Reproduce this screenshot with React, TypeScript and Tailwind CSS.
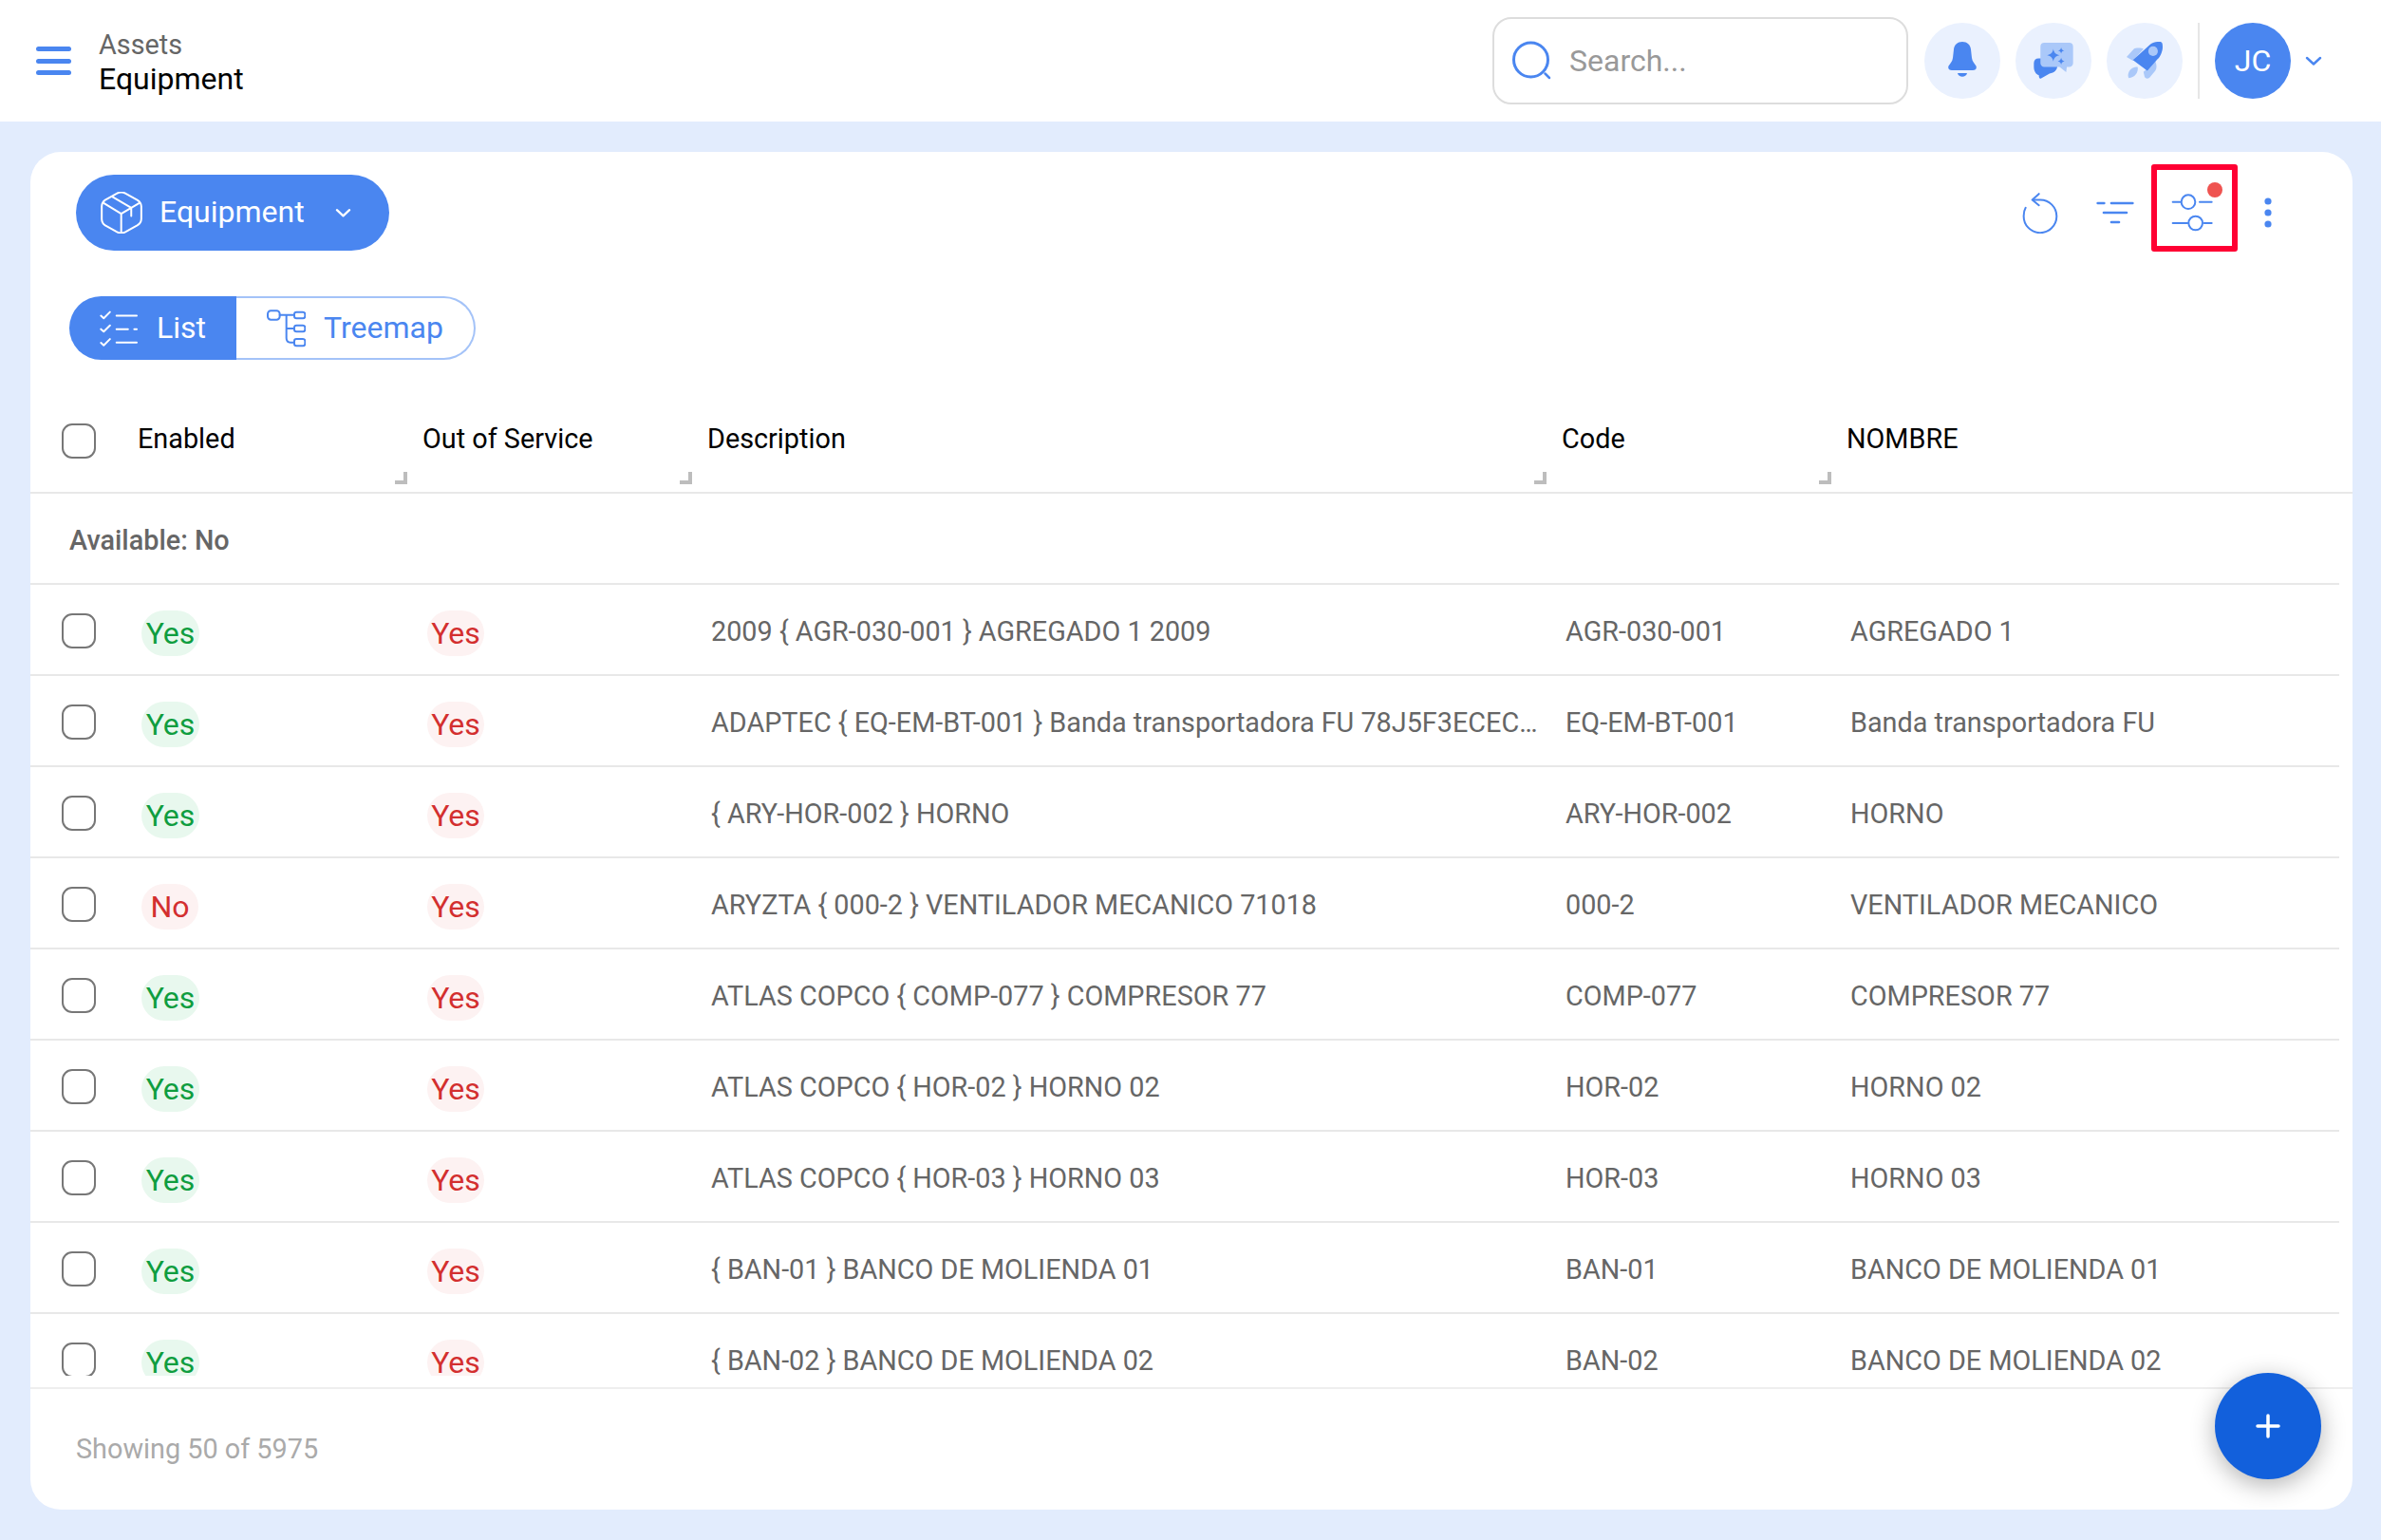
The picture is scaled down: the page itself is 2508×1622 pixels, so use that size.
import React from "react";

const rows = [
  { enabled: "Yes", desc: "2009 { AGR-030-001 } AGREGADO 1 2009", code: "AGR-030-001", name: "AGREGADO 1" },
  { enabled: "Yes", desc: "ADAPTEC { EQ-EM-BT-001 } Banda transportadora FU 78J5F3ECEC1 2014", code: "EQ-EM-BT-001", name: "Banda transportadora FU" },
  { enabled: "Yes", desc: "{ ARY-HOR-002 } HORNO", code: "ARY-HOR-002", name: "HORNO" },
  { enabled: "No", desc: "ARYZTA { 000-2 } VENTILADOR MECANICO 71018", code: "000-2", name: "VENTILADOR MECANICO" },
  { enabled: "Yes", desc: "ATLAS COPCO { COMP-077 } COMPRESOR 77", code: "COMP-077", name: "COMPRESOR 77" },
  { enabled: "Yes", desc: "ATLAS COPCO { HOR-02 } HORNO 02", code: "HOR-02", name: "HORNO 02" },
  { enabled: "Yes", desc: "ATLAS COPCO { HOR-03 } HORNO 03", code: "HOR-03", name: "HORNO 03" },
  { enabled: "Yes", desc: "{ BAN-01 } BANCO DE MOLIENDA 01", code: "BAN-01", name: "BANCO DE MOLIENDA 01" },
  { enabled: "Yes", desc: "{ BAN-02 } BANCO DE MOLIENDA 02", code: "BAN-02", name: "BANCO DE MOLIENDA 02" },
];

const gridCols = "grid grid-cols-[113px_300px_300px_900px_300px_1fr]";

function Checkbox() {
  return <div className="w-[36px] h-[37px] rounded-[11px] border-[2.5px] border-[#777777] bg-white" />;
}

function ResizeHandle() {
  return <div className="absolute right-[16px] bottom-[8px] w-[13px] h-[13px] border-r-[4px] border-b-[4px] border-[#bdbdbd]" />;
}

function Pill({ label, tone }: { label: string; tone: "green" | "red" }) {
  return (
    <span
      className={`inline-flex h-[48px] items-center justify-center rounded-full mt-[8px] text-[32px] ${
        tone === "green" ? "w-[61px] bg-[#e8f8ee] text-[#0f9d3f]" : "w-[60px] bg-[#fdf2f2] text-[#d32f2f]"
      }`}
    >
      {label}
    </span>
  );
}

function BellIcon() {
  return (
    <svg width="30" height="39" viewBox="0 0 30 39" fill="#4a86f0">
      <path d="M15 0C10 0 6.500 3 6 8L5 17C4.500 21 2 23 .5 25.500C-.5 28 1 30 4 30H26C29 30 30.500 28 29.500 25.500C28 23 25.500 21 25 17L24 8C23.500 3 20 0 15 0Z" />
      <path d="M10 33H20C19 38 11 38 10 33Z" />
    </svg>
  );
}

function ChatIcon() {
  return (
    <svg width="42" height="38" viewBox="430 118 125 115">
      <path d="M445 168H490C500 168 505 178 505 190C505 205 495 215 480 216L452 232C448 233 446 230 446 222C436 218 430 208 430 195V183C430 174 436 168 445 168Z" fill="#4a86f0" />
      <path d="M463 118H543C550 118 555 123 555 130V183C555 190 550 195 543 195H535L533 212L512 195H463C456 195 451 190 451 183V130C451 123 456 118 463 118Z" fill="#aac8f9" />
      <path d="M492 138C494 150 500 156 512 158C500 160 494 166 492 178C490 166 484 160 472 158C484 156 490 150 492 138Z" fill="#4a86f0" />
      <path d="M517 133C518 139 521 142 527 143C521 144 518 147 517 153C516 147 513 144 507 143C513 142 516 139 517 133Z" fill="#4a86f0" />
      <path d="M517 166C518 172 521 176 528 177C521 178 518 182 517 188C516 182 513 178 506 177C513 176 516 172 517 166Z" fill="#4a86f0" />
    </svg>
  );
}

function RocketIcon() {
  return (
    <svg width="38" height="39" viewBox="725 118 113 115">
      <path d="M725 165L748 140C752 136 772 136 778 140L745 177Z" fill="#aac8f9" />
      <path d="M815 178C820 190 820 200 815 208L797 230C790 235 782 232 781 225L778 212Z" fill="#aac8f9" />
      <path d="M760 197C762 215 750 230 732 231C727 225 730 205 745 199C750 197 756 196 760 197Z" fill="#aac8f9" />
      <path d="M745 175L800 125C810 118 825 116 833 118C838 120 838 128 838 135C837 150 830 165 822 172L790 208Z" fill="#4a86f0" />
      <circle cx="808" cy="147" r="15" fill="#aac8f9" />
    </svg>
  );
}

function BoxIcon() {
  return (
    <svg width="44" height="44" viewBox="138 95 132 133" fill="none" stroke="white" strokeWidth="6" strokeLinecap="round" strokeLinejoin="round">
      <path d="M190 100C198 96 208 96 216 100L254 121C262 126 267 133 267 142V181C267 190 262 197 254 202L216 223C208 227 198 227 190 223L152 202C145 197 141 190 141 181V142C141 133 145 126 152 121Z" />
      <path d="M146 130L203 165L262 130M203 165V225M173 110L235 146V172" />
    </svg>
  );
}

function ListIcon() {
  return (
    <svg width="40" height="40" viewBox="133 468 122 120" fill="none" stroke="white" strokeWidth="6" strokeLinecap="round" strokeLinejoin="round">
      <path d="M137 487L146 495L166 475M137 530L146 538L166 518M137 574L146 582L166 562" />
      <path d="M187 487H252M187 530H224M244 530H252M187 573H252" />
    </svg>
  );
}

function TreemapIcon() {
  return (
    <svg width="41" height="40" viewBox="663 470 123 120" fill="none" stroke="#4a86f0" strokeWidth="6" strokeLinecap="round" strokeLinejoin="round">
      <rect x="666" y="474" width="38" height="28" rx="10" />
      <rect x="750" y="478" width="34" height="20" rx="7" />
      <rect x="750" y="520" width="34" height="20" rx="7" />
      <rect x="750" y="563" width="34" height="22" rx="7" />
      <path d="M704 487H750M725 487V560C725 568 730 574 738 574H750M725 530H750" />
    </svg>
  );
}

function ResetIcon() {
  return (
    <svg width="38" height="43" viewBox="90 128 114 128" fill="none" stroke="#4a86f0" strokeWidth="6" strokeLinecap="round" strokeLinejoin="round">
      <path d="M125 150H147A52 52 0 1 1 95 200C95 190 97 182 101 175" />
      <path d="M143 131L122 150L143 167" />
    </svg>
  );
}

function FilterIcon() {
  return (
    <svg width="40" height="26" viewBox="325 160 120 72" fill="none" stroke="#4a86f0" strokeWidth="8" strokeLinecap="round">
      <path d="M330 166H350M373 166H440M349 196H421M373 226H397" />
    </svg>
  );
}

function SlidersIcon() {
  return (
    <svg width="44" height="42" viewBox="560 130 132 124" fill="none" stroke="#4a86f0" strokeWidth="6" strokeLinecap="round">
      <path d="M565 158H590M650 158H688M565 225H612M664 225H688" />
      <circle cx="614" cy="158" r="22" />
      <circle cx="637" cy="225" r="22" />
    </svg>
  );
}

function KebabIcon() {
  return (
    <svg width="8" height="32" viewBox="0 0 8 32" fill="#4a86f0">
      <circle cx="4" cy="4" r="3.600" />
      <circle cx="4" cy="16" r="3.600" />
      <circle cx="4" cy="28" r="3.600" />
    </svg>
  );
}

function Chevron({ color, w, h }: { color: string; w: number; h: number }) {
  return (
    <svg width={w} height={h} viewBox="0 0 18 10" fill="none" stroke={color} strokeWidth="2.400" strokeLinecap="round" strokeLinejoin="round">
      <path d="M2 2L9 8.500L16 2" />
    </svg>
  );
}

export default function App() {
  return (
    <div className="w-[2508px] h-[1622px] bg-[#e2ecfd] flex flex-col font-['Roboto',sans-serif] overflow-hidden">
      {/* Top bar */}
      <header className="h-[128px] shrink-0 bg-white flex items-center justify-between">
        <div className="flex items-center pl-[38px]">
          <div className="flex flex-col gap-[7.500px] w-[37px]">
            <div className="h-[5px] rounded-full bg-[#4a86f0]" />
            <div className="h-[5px] rounded-full bg-[#4a86f0]" />
            <div className="h-[5px] rounded-full bg-[#4a86f0]" />
          </div>
          <div className="ml-[29px] mt-[2px] flex flex-col">
            <span className="text-[28.800px] leading-[36px] text-[#666666]">Assets</span>
            <span className="text-[32px] leading-[37px] text-black">Equipment</span>
          </div>
        </div>
        <div className="flex items-center pr-[62px]">
          <div className="w-[438px] h-[92px] -mt-[1px] rounded-[20px] border-2 border-[#dddddd] flex items-center pl-[18px]">
            <svg width="44" height="42" viewBox="0 0 44 42" fill="none" stroke="#4a86f0">
              <circle cx="20.500" cy="20" r="18" strokeWidth="3" />
              <path d="M35.500 34.500L40 39" strokeWidth="2.500" strokeLinecap="round" />
            </svg>
            <span className="ml-[17px] text-[32px] text-[#999999]">Search...</span>
          </div>
          <div className="ml-[17px] flex gap-[16px]">
            <div className="w-[80px] h-[80px] -mt-[1px] rounded-full bg-[#eaf1fe] flex items-center justify-center"><BellIcon /></div>
            <div className="w-[80px] h-[80px] -mt-[1px] rounded-full bg-[#eaf1fe] flex items-center justify-center"><ChatIcon /></div>
            <div className="w-[80px] h-[80px] -mt-[1px] rounded-full bg-[#eaf1fe] flex items-center justify-center"><RocketIcon /></div>
          </div>
          <div className="ml-[16px] w-[2px] h-[80px] bg-[#e6e6e6]" />
          <div className="ml-[16px] w-[80px] h-[80px] rounded-full bg-[#4a86f0] flex items-center justify-center text-[32px] text-white">JC</div>
          <div className="ml-[15px]"><Chevron color="#4a86f0" w={18} h={10} /></div>
        </div>
      </header>

      {/* Content */}
      <main className="flex-1 pt-[32px] pl-[32px] pr-[30px] pb-[32px] min-h-0">
        <div className="relative h-full bg-white rounded-[32px] flex flex-col">
          {/* Toolbar */}
          <div className="flex items-center justify-between pt-[24px] pl-[48px]">
            <div className="h-[80px] w-[330px] rounded-full bg-[#4a86f0] flex items-center pl-[26px] text-white">
              <BoxIcon />
              <span className="ml-[18px] -mt-[2px] text-[32px]">Equipment</span>
              <span className="ml-[32px]"><Chevron color="white" w={17} h={10} /></span>
            </div>
            <div className="flex items-center pr-[85px]">
              <ResetIcon />
              <div className="ml-[40px]"><FilterIcon /></div>
              <div className="relative ml-[39px]">
                <SlidersIcon />
                <div className="absolute -top-[11px] right-[-10px] w-[16px] h-[16px] rounded-full bg-[#ef5350]" />
                <div className="absolute -left-[21px] -top-[30px] w-[91px] h-[92px] rounded-[3px] border-[6px] border-[#ff0033]" />
              </div>
              <div className="ml-[54px]"><KebabIcon /></div>
            </div>
          </div>

          {/* View toggle */}
          <div className="mt-[48px] ml-[41px] w-[428px] h-[67px] flex text-[32px]">
            <div className="w-[176px] rounded-l-full bg-[#4a86f0] text-white flex items-center pl-[32px]">
              <ListIcon />
              <span className="ml-[20px] -mt-[2px]">List</span>
            </div>
            <div className="flex-1 rounded-r-full border-2 border-l-0 border-[#a4c3f8] text-[#4a86f0] flex items-center pl-[32px]">
              <TreemapIcon />
              <span className="ml-[19px] -mt-[2px]">Treemap</span>
            </div>
          </div>

          {/* Column headers */}
          <div className={`${gridCols} mt-[41px] h-[100px] border-b-2 border-[#e8e8e8] text-[28.800px] text-black shrink-0`}>
            <div className="pl-[33px] pt-[26px]"><Checkbox /></div>
            <div className="relative pt-[21px]">Enabled<ResizeHandle /></div>
            <div className="relative pt-[21px]">Out of Service<ResizeHandle /></div>
            <div className="relative pt-[21px]">Description<ResizeHandle /></div>
            <div className="relative pt-[21px]">Code<ResizeHandle /></div>
            <div className="pt-[21px]">NOMBRE</div>
          </div>

          {/* Rows */}
          <div className="h-[929px] mr-[14px] overflow-hidden shrink-0">
            <div className="h-[96px] flex items-center pl-[41px] pt-[6px] border-b-2 border-[#e8e8e8] text-[28.800px] font-medium text-[#666666]">
              Available: No
            </div>
            {rows.map((row) => (
              <div key={row.code} className={`${gridCols} h-[96px] items-center border-b-2 border-[#e8e8e8] text-[28.800px] text-[#666666]`}>
                <div className="pl-[33px] mt-[3px]"><Checkbox /></div>
                <div className="pl-[4px]"><Pill label={row.enabled} tone={row.enabled === "Yes" ? "green" : "red"} /></div>
                <div className="pl-[5px]"><Pill label="Yes" tone="red" /></div>
                <div className="pl-[4px] pt-[6px] pr-[25px] truncate">{row.desc}</div>
                <div className="pl-[4px] pt-[6px]">{row.code}</div>
                <div className="pl-[4px] pt-[6px]">{row.name}</div>
              </div>
            ))}
          </div>

          {/* Footer */}
          <div className="mt-[12px] flex-1 border-t-2 border-[#eeeeee] flex items-center pl-[48px] text-[28.800px] text-[#aaaaaa]">
            Showing 50 of 5975
          </div>

          <button className="absolute right-[33px] bottom-[32px] w-[112px] h-[112px] rounded-full bg-[#1260dc] shadow-[0_6px_26px_rgba(0,0,0,0.3)] flex items-center justify-center">
            <svg width="26" height="26" viewBox="0 0 26 26" stroke="white" strokeWidth="3.500" strokeLinecap="round">
              <path d="M13 2V24M2 13H24" />
            </svg>
          </button>
        </div>
      </main>
    </div>
  );
}
